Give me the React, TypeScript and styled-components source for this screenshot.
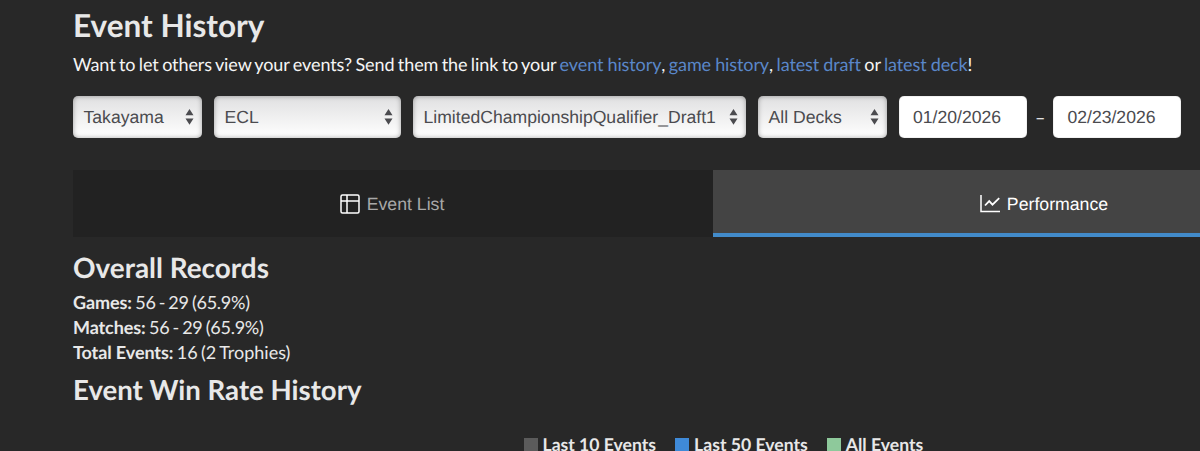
import React from 'react';
import styled, { createGlobalStyle } from 'styled-components';

const GlobalStyle = createGlobalStyle`
  body {
    margin: 0;
    overflow: hidden;
    background: #282828;
    color: #e8e8e8;
    font-family: Lato, sans-serif;
    font-size: 18px;
    text-rendering: geometricPrecision;
  }
`;

const Page = styled.main`
  box-sizing: border-box;
  height: 451px;
  padding: 7px 0 0 73px;
  overflow: hidden;
`;

const Heading = styled.h2<{ $size: number }>`
  margin: 0;
  height: 36px;
  font-size: ${(p) => p.$size}px;
  font-weight: 700;
  line-height: 36px;
  white-space: nowrap;
`;

const Intro = styled.p`
  margin: 8px 0 19px;
  color: #f5f5f5;
  font-size: 18px;
  letter-spacing: -0.1px;
  word-spacing: -1.05px;
  line-height: 26px;
  white-space: nowrap;
`;

const Link = styled.a`
  color: #5a87c9;
  letter-spacing: -0.1px;
  word-spacing: -0.4px;
`;

const Filters = styled.div`
  display: flex;
  align-items: center;
  gap: 12px;
  height: 42px;
`;

const Select = styled.div<{ $width: number }>`
  box-sizing: border-box;
  display: flex;
  flex: none;
  align-items: center;
  justify-content: space-between;
  width: ${(p) => p.$width}px;
  height: 42px;
  padding: 0 8px 0 10.5px;
  border-radius: 5px;
  background: linear-gradient(#e0e0e1, #fff);
  box-shadow: inset 0 0 5px rgba(0, 0, 0, 0.35);
  color: #4b4b4f;
  font-family: 'Liberation Sans', sans-serif;
  font-size: 17.6px;
  white-space: nowrap;
`;

const DateRange = styled.div`
  display: flex;
  align-items: center;
  gap: 8px;
`;

const DateInput = styled.div`
  box-sizing: border-box;
  width: 128px;
  height: 42px;
  padding-left: 14px;
  border-radius: 5px;
  background: #fff;
  box-shadow: inset 0 0 1px #777;
  color: #4b4b4f;
  font-family: 'Liberation Sans', sans-serif;
  font-size: 17.6px;
  line-height: 43px;
`;

const Tabs = styled.div`
  display: flex;
  height: 67px;
  margin: 32px 0 12px;
`;

const Tab = styled.div<{ $active?: boolean; $width: number }>`
  box-sizing: border-box;
  display: flex;
  flex: none;
  align-items: center;
  justify-content: center;
  gap: 7px;
  width: ${(p) => p.$width}px;
  border-bottom: ${(p) => (p.$active ? '4px solid #428bca' : '0')};
  padding: ${(p) => (p.$active ? '5px 0 0' : '1px 2px 0 0')};
  background: ${(p) => (p.$active ? '#444' : '#222')};
  color: ${(p) => (p.$active ? '#fff' : '#a8a8a8')};
  font-family: 'Liberation Sans', sans-serif;
  font-size: 17.7px;

  svg {
    color: #fff;
  }
`;

const Records = styled.div`
  margin: 5px 0 7px;
  font-size: 18px;
  line-height: 25px;
  word-spacing: -1.2px;
`;

const RecordLabel = styled.b`
  letter-spacing: -0.1px;
  word-spacing: 0;
`;

const RecordValue = styled.span<{ $tracking: number }>`
  letter-spacing: ${(p) => p.$tracking}px;
`;

const Legend = styled.div`
  display: flex;
  gap: 19px;
  margin: 25px 0 0 450.5px;
  font-size: 17.6px;
  font-weight: 700;
  line-height: 24px;
`;

const LegendItem = styled.div`
  display: flex;
  align-items: center;
  gap: 5px;
  white-space: nowrap;
`;

const Swatch = styled.span<{ $color: string }>`
  width: 14px;
  height: 14px;
  background: ${(p) => p.$color};
`;

const SortArrows = () => (
  <svg width="9" height="16" viewBox="0 0 9 16" fill="#4b4b4f">
    <path d="M4.5 0 8.5 6.3H.5ZM.5 9.5h8L4.5 15.8Z" />
  </svg>
);

const TableIcon = () => (
  <svg width="20" height="20" viewBox="0 0 20 20" fill="none" stroke="currentColor" strokeWidth="1.5">
    <rect x="1" y="1" width="18" height="18" rx="1.5" />
    <path d="M7 1v18M1 7h18" />
  </svg>
);

const ChartIcon = () => (
  <svg width="20" height="18" viewBox="0 0 20 18" fill="none" stroke="currentColor" strokeWidth="1.5">
    <path d="M1 0v16.5h19" />
    <path strokeWidth="1.8" d="m5 10.5 4.2-4.4 3.3 3.6 6.7-6.6" />
  </svg>
);

const filters = [
  { label: 'Takayama', width: 129 },
  { label: 'ECL', width: 187 },
  { label: 'LimitedChampionshipQualifier_Draft1', width: 333 },
  { label: 'All Decks', width: 129 },
];

const records = [
  { label: 'Games:', value: '56 - 29 (65.9%)', tracking: -0.25 },
  { label: 'Matches:', value: '56 - 29 (65.9%)', tracking: -0.25 },
  { label: 'Total Events:', value: '16 (2 Trophies)', tracking: 0 },
];

const legend = [
  { label: 'Last 10 Events', color: '#5b5b5b' },
  { label: 'Last 50 Events', color: '#3f8ad8' },
  { label: 'All Events', color: '#8ec99b' },
];

const App: React.FC = () => (
  <>
    <GlobalStyle />
    <Page>
      <Heading as="h1" $size={31.5}>Event History</Heading>
      <Intro>
        Want to let others view your events? Send them the link to your <Link>event history</Link>,{' '}
        <Link>game history</Link>, <Link>latest draft</Link> or <Link>latest deck</Link>!
      </Intro>
      <Filters>
        {filters.map((f) => (
          <Select key={f.label} $width={f.width}>
            {f.label}
            <SortArrows />
          </Select>
        ))}
        <DateRange>
          <DateInput>01/20/2026</DateInput>
          <span>–</span>
          <DateInput>02/23/2026</DateInput>
        </DateRange>
      </Filters>
      <Tabs>
        <Tab $width={640}>
          <TableIcon />
          Event List
        </Tab>
        <Tab $width={662} $active>
          <ChartIcon />
          Performance
        </Tab>
      </Tabs>
      <Heading $size={27.9}>Overall Records</Heading>
      <Records>
        {records.map((r) => (
          <div key={r.label}>
            <RecordLabel>{r.label}</RecordLabel>{' '}
            <RecordValue $tracking={r.tracking}>{r.value}</RecordValue>
          </div>
        ))}
      </Records>
      <Heading $size={27.6}>Event Win Rate History</Heading>
      <Legend>
        {legend.map((l) => (
          <LegendItem key={l.label}>
            <Swatch $color={l.color} />
            {l.label}
          </LegendItem>
        ))}
      </Legend>
    </Page>
  </>
);

export default App;
